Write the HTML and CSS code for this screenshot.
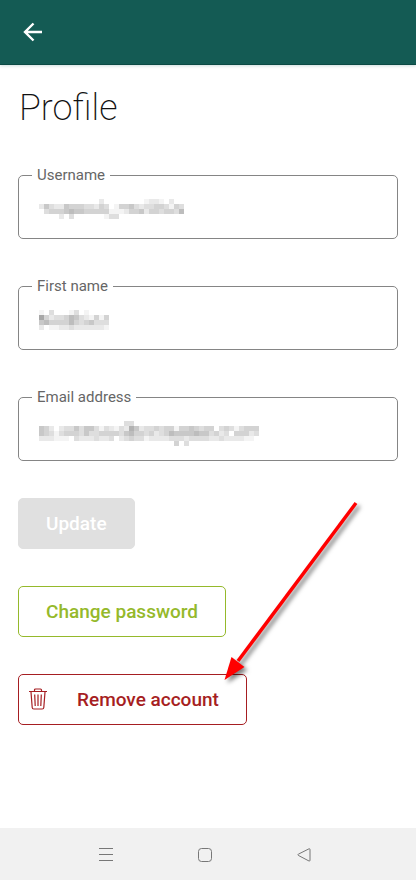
FILE: index.html
```html
<!DOCTYPE html>
<html lang="en">
<head>
  <meta charset="UTF-8">
  <meta name="viewport" content="width=device-width, initial-scale=1.0">
  <title>Profile</title>
  <link rel="stylesheet" href="styles.css">
</head>
<body>

  <!-- Top bar -->
  <header class="topbar">
    <button class="back" type="button" aria-label="Back">
      <svg width="24" height="24" viewBox="0 0 24 24" fill="none" stroke="#fff" stroke-width="2.4">
        <path d="M22 12H4.500M13.500 3.500L5 12l8.500 8.500"/>
      </svg>
    </button>
  </header>

  <main class="profile">
    <h1>Profile</h1>

    <form>
      <fieldset class="field">
        <legend><label for="username">Username</label></legend>
        <input type="text" id="username">
        <svg class="mask" data-mask="username"></svg>
      </fieldset>
      <fieldset class="field">
        <legend><label for="first-name">First name</label></legend>
        <input type="text" id="first-name">
        <svg class="mask" data-mask="firstName"></svg>
      </fieldset>
      <fieldset class="field">
        <legend><label for="email">Email address</label></legend>
        <input type="email" id="email">
        <svg class="mask" data-mask="email"></svg>
      </fieldset>

      <div class="actions">
        <button class="btn update" type="submit" disabled>Update</button>
        <button class="btn change" type="button">Change password</button>
        <button class="btn remove" type="button">
          <svg width="20" height="24" viewBox="0 0 20 24" fill="none" stroke="currentColor" stroke-width="1.200">
            <path d="M1 3.500h18M6.500 3.500V2q0-1 1-1h5q1 0 1 1v1.500M3 4l1.200 15.500q.1 1.500 1.600 1.500h8.400q1.500 0 1.600-1.500L17 4M6.700 6.500l.5 11.500M10 6.500V18M13.300 6.500L12.800 18"/>
          </svg>
          Remove account
        </button>

        <!-- Pointer to the remove button -->
        <svg class="pointer" width="160" height="200" viewBox="0 0 160 200" aria-hidden="true">
          <path d="M138 5L20 163" stroke="#f00" stroke-width="3.500"/>
          <path d="M6.500 182L13.500 159L26.500 169Z" fill="#f00"/>
        </svg>
      </div>
    </form>
  </main>

  <!-- System navigation -->
  <nav class="sysnav">
    <button type="button" aria-label="Recent apps">
      <svg width="16" height="16" viewBox="0 0 16 16"><path d="M1 1.500h14M1 7.500h14M1 13.500h14"/></svg>
    </button>
    <button type="button" aria-label="Home">
      <svg width="16" height="16" viewBox="0 0 16 16"><rect x="1.500" y="1.500" width="13" height="13" rx="3"/></svg>
    </button>
    <button type="button" aria-label="Back">
      <svg width="16" height="16" viewBox="0 0 16 16"><path d="M13 1.800L2.300 7.200q-1 .6 0 1.200L13 14q1 .3 1-.7V2.500q0-1-1-.7z"/></svg>
    </button>
  </nav>

  <script>
    // Private values are shown as a mosaic, one digit per cell (0 = clear, 9 = darkest)
    const masks = {
      username: [
        '00000000000020000000012210200',
        '25322544433243014453233443143',
        '03444565544444111244524434436',
        '00002030000001330000000000000'
      ],
      firstName: [
        '10300013010000',
        '84233465321414',
        '56444464345333',
        '20112232222221'
      ],
      email: [
        '00000000000000000330000000000000000000000000',
        '54202335355313213275233434414454344034313444',
        '54313444353344443564434234655556553423044423',
        '22211103222322302343312222333233332232222110',
        '00000000000000000000000000040300000000000000'
      ]
    };

    document.querySelectorAll('.mask').forEach(svg => {
      const rows = masks[svg.dataset.mask];
      svg.setAttribute('width', rows[0].length * 5);
      svg.setAttribute('height', rows.length * 5);
      svg.innerHTML = rows.map((row, y) => [...row].map((level, x) => {
        const grey = 255 - level * 11;
        return `<rect x="${x * 5}" y="${y * 5}" width="5" height="5" fill="rgb(${grey},${grey},${grey})"/>`;
      }).join('')).join('');
    });
  </script>
</body>
</html>
```

FILE: styles.css
```css
* {
  box-sizing: border-box;
}
body {
  display: flex;
  flex-direction: column;
  min-height: 100vh;
  margin: 0;
  background-color: #fff;
  font-family: Roboto, "Liberation Sans", sans-serif;
}
button {
  font-family: inherit;
  cursor: pointer;
}
.topbar {
  display: flex;
  align-items: center;
  height: 65px;
  padding: 0 20px;
  background-color: #145b54;
  border-bottom: 1px solid #0c4a44;
  box-shadow: 0 1px 3px rgba(0, 80, 80, 0.2);
}
.back {
  display: flex;
  padding: 0;
  border: none;
  background: none;
}
.profile {
  flex: 1;
  padding: 24px 18px;
}
h1 {
  margin: 0 0 40px;
  padding-left: 1px;
  font-size: 36px;
  line-height: 38px;
  font-weight: 200;
  color: #111;
}
.field {
  position: relative;
  height: 72px;
  margin: 0 0 39px;
  padding: 0 13px;
  border: 1px solid #858585;
  border-radius: 5px;
}
.field legend {
  padding: 0 5px;
  font-size: 15px;
  line-height: 16px;
  color: #666;
}
.field input {
  width: 100%;
  height: 50px;
  padding: 0 5px;
  border: none;
  outline: none;
  background: none;
  font-size: 18px;
}
.mask {
  position: absolute;
  top: 16px;
  left: 20px;
}
.actions {
  position: relative;
  display: flex;
  flex-direction: column;
  align-items: flex-start;
  gap: 37px;
  margin-top: -2px;
}
.btn {
  display: flex;
  align-items: center;
  height: 51px;
  padding: 0 27px;
  border: 1px solid;
  border-radius: 5px;
  background: none;
  font-size: 19px;
  font-weight: 500;
}
.update {
  border-color: #e0e0e0;
  background-color: #e0e0e0;
  color: #fff;
}
.change {
  color: #95b92b;
}
.remove {
  gap: 29px;
  padding-left: 9px;
  color: #a61e22;
}
.pointer {
  position: absolute;
  top: 0;
  left: 200px;
  filter: drop-shadow(3px 3px 2px rgba(0, 0, 0, 0.5));
}
.sysnav {
  display: flex;
  justify-content: center;
  gap: 75px;
  height: 52px;
  padding: 2px 6px 0 0;
  background-color: #f1f1f1;
}
.sysnav button {
  display: flex;
  align-items: center;
  padding: 0 4px;
  border: none;
  background: none;
}
.sysnav svg {
  fill: none;
  stroke: #777;
}
```
